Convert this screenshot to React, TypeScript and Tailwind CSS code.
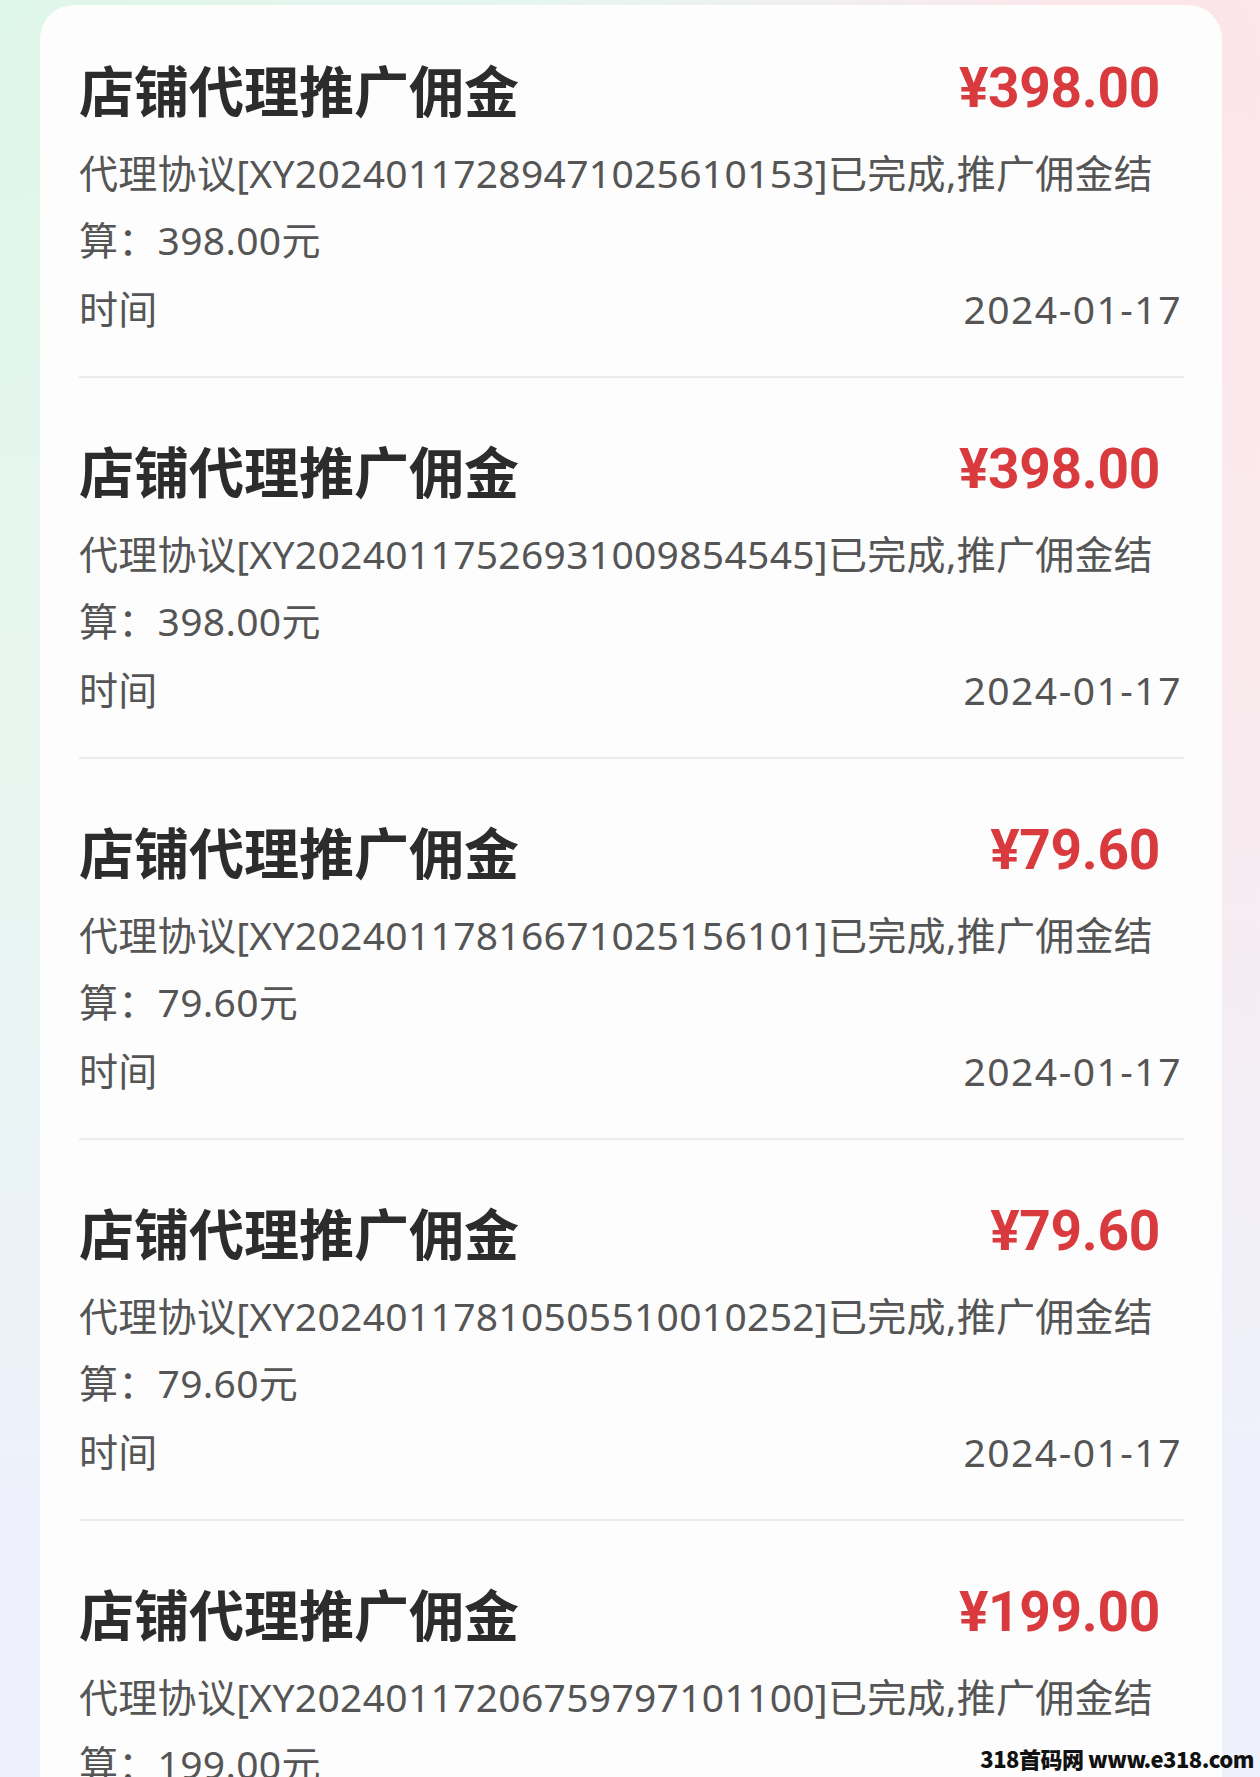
import React from 'react';

type Record = {
  amount: string;
  no: string;
  settled: string;
  date: string;
};

const records: Record[] = [
  { amount: '¥398.00', no: 'XY20240117289471025610153', settled: '398.00元', date: '2024-01-17' },
  { amount: '¥398.00', no: 'XY20240117526931009854545', settled: '398.00元', date: '2024-01-17' },
  { amount: '¥79.60', no: 'XY20240117816671025156101', settled: '79.60元', date: '2024-01-17' },
  { amount: '¥79.60', no: 'XY20240117810505510010252', settled: '79.60元', date: '2024-01-17' },
  { amount: '¥199.00', no: 'XY20240117206759797101100', settled: '199.00元', date: '2024-01-17' },
];

const cjk = "font-['Noto_Sans_CJK_SC',sans-serif]";
const body = "font-['Noto_Sans','Noto_Sans_CJK_SC',sans-serif]";

function CommissionRow({ r }: { r: Record }) {
  return (
    <div className="border-b-2 border-[#ececec] pt-[59px] pb-[33px] first:pt-[51px]">
      <div className="flex h-[64px] items-center justify-between">
        <h2 className={`${cjk} text-[55px] font-bold leading-none text-[#2c2c2c]`}>店铺代理推广佣金</h2>
        <span className="mr-[24px] font-['Roboto',sans-serif] text-[55px] font-bold leading-none tracking-[-0.3px] text-[#d83a3d]">
          {r.amount}
        </span>
      </div>
      <p className={`${body} mt-[19px] whitespace-nowrap text-[39px] leading-[67px] tracking-[0.3px] text-[#555555]`}>
        代理协议[{r.no}]已完成,推广佣金结
        <br />
        算：{r.settled}
      </p>
      <div className={`${body} mt-[3px] flex h-[67px] items-center justify-between text-[39px] text-[#555555]`}>
        <span className="tracking-[0.3px]">时间</span>
        <span className="mr-[2px] tracking-[1.5px]">{r.date}</span>
      </div>
    </div>
  );
}

export default function App() {
  return (
    <div className="relative h-[1777px] overflow-hidden bg-[#eef1fb] bg-[radial-gradient(ellipse_at_0%_0%,#dff6ea_0%,#e7f6ef_30%,rgba(238,241,251,0)_60%),radial-gradient(ellipse_at_100%_0%,#fde5e9_0%,#f9eaee_28%,rgba(238,241,251,0)_58%)] pl-[40px] pr-[38px] pt-[5px]">
      <div className="rounded-t-[34px] bg-[#fdfdfd] pl-[39px] pr-[38px]">
        {records.map((r, i) => (
          <CommissionRow key={i} r={r} />
        ))}
      </div>

      <div className={`${cjk} absolute bottom-[8px] right-[6px] text-[22px] font-black leading-none tracking-[-0.5px] text-[#111111]`}>
        318首码网 www.e318.com
      </div>
    </div>
  );
}
